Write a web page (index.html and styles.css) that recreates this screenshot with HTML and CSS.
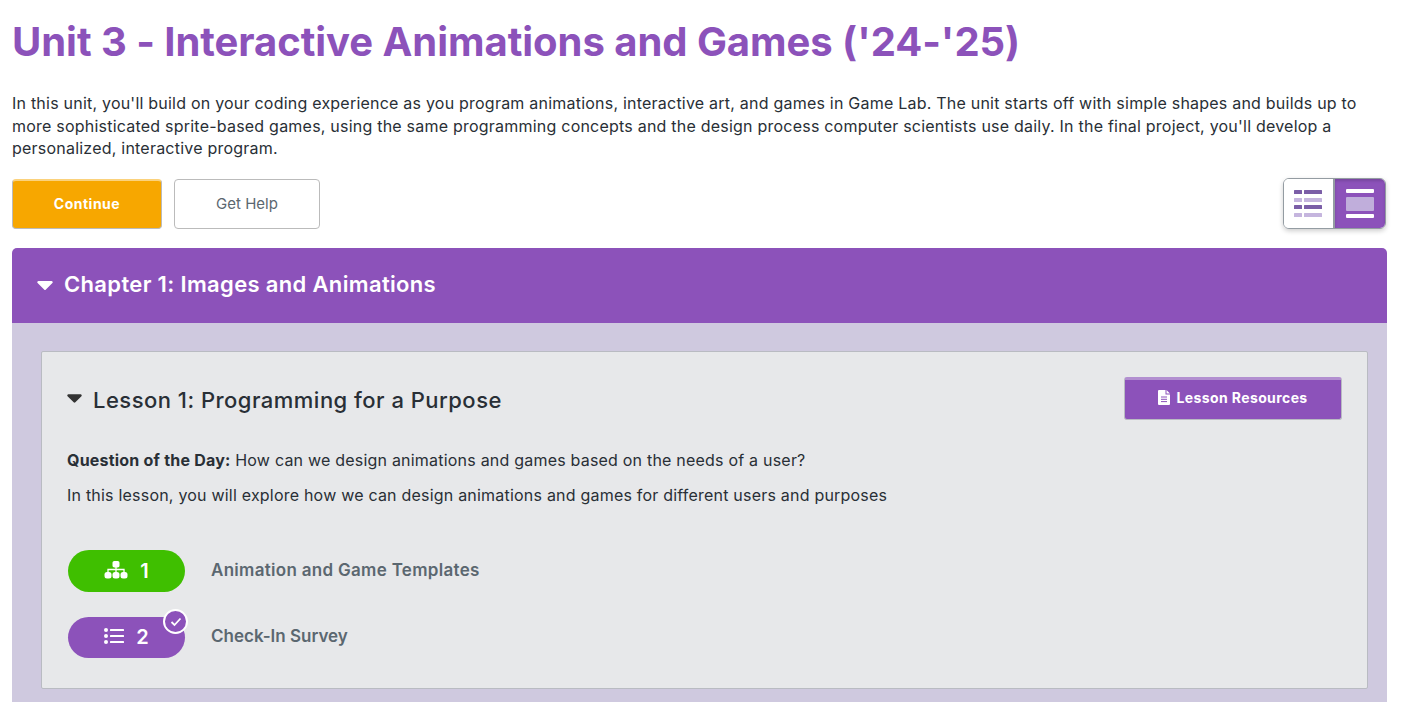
FILE: index.html
```html
<!DOCTYPE html>
<html lang="en">
<head>
<meta charset="utf-8">
<title>Unit 3</title>
<link rel="stylesheet" href="styles.css">
</head>
<body>
<main class="page">
  <h1 class="title">Unit 3 - Interactive Animations and Games ('24-'25)</h1>
  <p class="intro">In this unit, you'll build on your coding experience as you program animations, interactive art, and games in Game Lab. The unit starts off with simple shapes and builds up to more sophisticated sprite-based games, using the same programming concepts and the design process computer scientists use daily. In the final project, you'll develop a personalized, interactive program.</p>
  <div class="actions">
    <button class="btn btn-continue">Continue</button>
    <button class="btn btn-help">Get Help</button>
    <div class="toggle">
      <button class="toggle-btn toggle-list" aria-label="List view">
        <svg width="28" height="27" viewBox="0 0 28 27">
          <g fill="#7b5ea7"><rect x="0" y="0" width="8" height="4" rx=".5"/><rect x="10" y="0" width="18" height="4" rx=".5"/><rect x="0" y="15" width="8" height="4" rx=".5"/><rect x="10" y="15" width="18" height="4" rx=".5"/></g>
          <g fill="#c5b5de"><rect x="0" y="8" width="8" height="4" rx=".5"/><rect x="10" y="8" width="18" height="4" rx=".5"/><rect x="0" y="23" width="8" height="4" rx=".5"/><rect x="10" y="23" width="18" height="4" rx=".5"/></g>
        </svg>
      </button>
      <button class="toggle-btn toggle-detail" aria-label="Detail view">
        <svg width="28" height="29" viewBox="0 0 28 29">
          <rect x="0" y="0" width="28" height="4" rx="1" fill="#fff"/><rect x="0" y="8" width="28" height="14" rx="1" fill="#c0aedb"/><rect x="0" y="25" width="28" height="4" rx="1" fill="#fff"/>
        </svg>
      </button>
    </div>
  </div>
  <section class="chapter">
    <header class="chapter-head">
      <svg class="caret" width="16" height="9" viewBox="0 0 16 9"><path d="M1.500 0h13a1.200 1.200 0 0 1 .9 2L8.900 8.400a1.200 1.200 0 0 1-1.800 0L.6 2a1.200 1.200 0 0 1 .9-2z" fill="#fff"/></svg>
      <h2 class="chapter-title">Chapter 1: Images and Animations</h2>
    </header>
    <div class="chapter-body">
      <article class="lesson">
        <div class="lesson-head">
          <svg class="caret" width="15" height="9" viewBox="0 0 16 9"><path d="M1.500 0h13a1.200 1.200 0 0 1 .9 2L8.900 8.400a1.200 1.200 0 0 1-1.800 0L.6 2a1.200 1.200 0 0 1 .9-2z" fill="#333"/></svg>
          <h3 class="lesson-title">Lesson 1: Programming for a Purpose</h3>
          <button class="btn-resources">
            <svg width="12" height="15" viewBox="0 0 12 15"><path d="M1 0h6.500v4.500H12V14a1 1 0 0 1-1 1H1a1 1 0 0 1-1-1V1a1 1 0 0 1 1-1z" fill="#fff"/><path d="M8.500 0L12 3.500H8.500z" fill="#fff"/><path d="M3 7h6M3 9.300h6M3 11.600h6" stroke="#8c52ba" stroke-width="1"/></svg>
            Lesson Resources
          </button>
        </div>
        <p class="question"><strong>Question of the Day:</strong> How can we design animations and games based on the needs of a user?</p>
        <p class="summary">In this lesson, you will explore how we can design animations and games for different users and purposes</p>
        <ul class="levels">
          <li class="level">
            <span class="bubble bubble-green">
              <svg class="level-icon" width="24" height="18" viewBox="0 0 24 18"><g fill="#fff"><rect x="8.500" y="0" width="7" height="6.500" rx="1.800"/><rect x="0.500" y="11" width="7" height="6.500" rx="2.500"/><rect x="8.500" y="11" width="7" height="6.500" rx="2.500"/><rect x="16.500" y="11" width="7" height="6.500" rx="2.500"/></g><path d="M12 6v5M4 11V8.500h16V11" fill="none" stroke="#fff" stroke-width="1.300"/></svg>
              <span>1</span>
            </span>
            <span class="level-name">Animation and Game Templates</span>
          </li>
          <li class="level">
            <span class="bubble bubble-purple">
              <svg class="level-icon" width="20" height="16" viewBox="0 0 20 16"><g fill="#fff"><circle cx="2" cy="2" r="2"/><circle cx="2" cy="8" r="2"/><circle cx="2" cy="14" r="2"/><rect x="6" y="1" width="14" height="2" rx=".5"/><rect x="6" y="7" width="14" height="2" rx=".5"/><rect x="6" y="13" width="14" height="2" rx=".5"/></g></svg>
              <span>2</span>
              <span class="badge"><svg width="12" height="10" viewBox="0 0 12 10"><path d="M1.500 5l3 3 6-6.500" fill="none" stroke="#fff" stroke-width="1.800"/></svg></span>
            </span>
            <span class="level-name level-name-short">Check-In Survey</span>
          </li>
        </ul>
      </article>
    </div>
  </section>
</main>
</body>
</html>
```
FILE: styles.css
```css
* { box-sizing: border-box; }
html, body { margin: 0; height: 702px; overflow: hidden; background: #fff; }
body { font-family: "Inter", "Liberation Sans", sans-serif; color: #292f36; }
.page { width: 1387px; padding-left: 12px; }
.title { margin: 0; padding-top: 18px; font-size: 40px; line-height: 48px; font-weight: 700; letter-spacing: -0.04px; color: #8c52ba; white-space: nowrap; }
.intro { margin: 26px 0 0; font-size: 16px; line-height: 22.5px; letter-spacing: 0.22px; }
.actions { display: flex; align-items: flex-start; margin-top: 19.5px; height: 50px; }
.btn { height: 50px; border-radius: 4px; font-family: inherit; padding: 0 0 1px; }
.btn-continue { width: 150px; font-size: 14px; letter-spacing: 0.5px; background: #f7a700; border: 1px solid #bbb; border-top: 2px solid #fbd27c; color: #fff; font-weight: 700; padding-bottom: 3px; }
.btn-help { width: 146px; margin-left: 12px; font-size: 15px; background: #fff; border: 1px solid #bbb; color: #5b6770; }
.toggle { display: flex; margin-left: auto; margin-right: 1px; margin-top: -1px; height: 51px; border: 1px solid #949ca2; border-radius: 6px; box-shadow: 0 2px 5px rgba(0,0,0,.2); overflow: hidden; }
.toggle-btn { border: 0; padding: 0; display: flex; align-items: center; justify-content: center; }
.toggle-list { width: 51px; padding-right: 1px; background: #fff; border-right: 2px solid #949ca2; }
.toggle-detail { width: 50px; background: #8c52ba; box-shadow: inset 0 2px 3px rgba(0,0,0,.15); }
.chapter { margin-top: 19px; }
.chapter-head { display: flex; align-items: center; height: 75px; padding-left: 25px; background: #8c52ba; border-radius: 5px 5px 0 0; }
.chapter-title { margin: 0 0 3px 11px; font-size: 22px; font-weight: 600; letter-spacing: 0.34px; color: #fff; }
.chapter-body { background: #cfc9df; padding: 28px 19px 40px 29px; }
.lesson { height: 338px; background: #e7e8ea; border: 1px solid #b9bbc2; border-radius: 2px; padding: 25px 25px 0; }
.lesson-head { display: flex; align-items: center; height: 43px; }
.lesson-title { margin: 2px 0 0 11px; font-size: 22px; font-weight: 500; letter-spacing: 0.48px; color: #292f36; }
.btn-resources { margin-left: auto; width: 218px; height: 43px; display: flex; align-items: center; justify-content: center; gap: 6px; background: #8c52ba; color: #fff; border: 1px solid #b9bbc2; border-top: 3px solid #b28fd0; border-radius: 3px; font-family: inherit; font-size: 14px; letter-spacing: 0.4px; font-weight: 700; padding: 0 0 5px; }
.question { margin: 28px 0 0; font-size: 16px; line-height: 24px; letter-spacing: 0.21px; }
.summary { margin: 11px 0 0; font-size: 16px; line-height: 24px; letter-spacing: 0.21px; }
.levels { list-style: none; margin: 43px 0 0 1px; padding: 0; }
.level { display: flex; align-items: center; height: 42px; margin-bottom: 25px; }
.bubble { position: relative; width: 117px; height: 42px; padding-bottom: 1px; border-radius: 21px; display: flex; align-items: center; justify-content: center; gap: 12px; color: #fff; font-size: 20px; font-weight: 600; }
.level-icon { margin-bottom: 2px; }
.bubble-green { background: #3fbf00; }
.bubble-purple { background: #8c52ba; height: 41px; align-self: flex-start; }
.badge { position: absolute; top: -8px; right: -3px; width: 25px; height: 25px; border: 2px solid #fff; border-radius: 50%; background: #8c52ba; display: flex; align-items: center; justify-content: center; }
.level-name { margin-left: 26px; margin-top: -2px; font-size: 17px; font-weight: 600; letter-spacing: 0.3px; color: #5b6770; }
.level-name-short { margin-top: -4px; letter-spacing: 0; }
```
